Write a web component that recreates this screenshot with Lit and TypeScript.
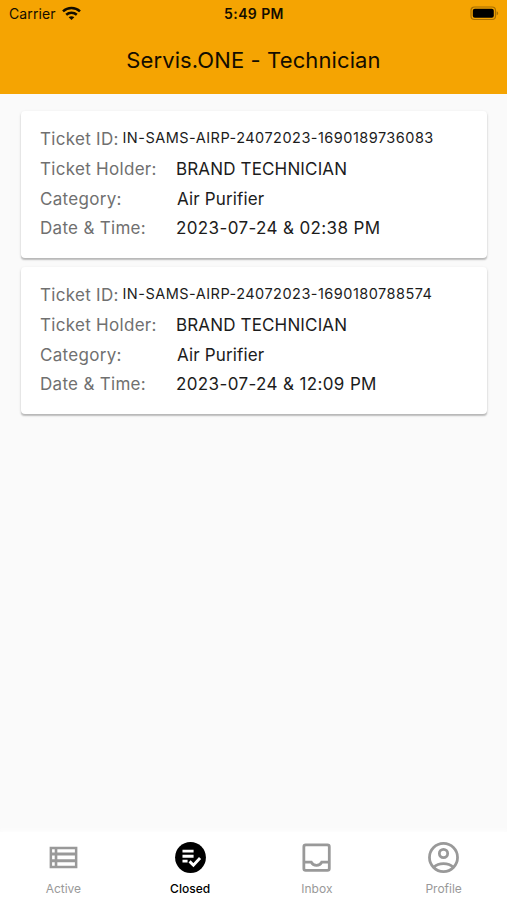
import { LitElement, html, css, svg } from "lit";
import { customElement, property } from "lit/decorators.js";

interface Ticket {
  id: string;
  holder: string;
  category: string;
  date: string;
}

const tickets: Ticket[] = [
  { id: "IN-SAMS-AIRP-24072023-1690189736083", holder: "BRAND TECHNICIAN", category: "Air Purifier", date: "2023-07-24 & 02:38 PM" },
  { id: "IN-SAMS-AIRP-24072023-1690180788574", holder: "BRAND TECHNICIAN", category: "Air Purifier", date: "2023-07-24 & 12:09 PM" },
];

const tabs = [
  {
    label: "Active",
    icon: svg`<path fill-rule="evenodd" d="M3 5h18v14H3zM4.600 6.600v2.100h1.700V6.600zM8 6.600v2.100h11.400V6.600zM4.600 10.700v2.400h1.700v-2.400zM8 10.700v2.400h11.400v-2.400zM4.600 15.100v2.300h1.700v-2.300zM8 15.100v2.300h11.400v-2.300z"/>`,
  },
  {
    label: "Closed",
    active: true,
    icon: svg`<circle cx="12" cy="12" r="10"/><path fill="#fff" d="M6.800 6.900H14v1.900H6.800zM6.800 10.200H14v1.900H6.800zM6.800 13.500h3.300v1.700H6.800z"/><path fill="none" stroke="#fff" stroke-width="1.900" d="M11.400 14.500l2.500 2.500 4.300-4.600"/>`,
  },
  {
    label: "Inbox",
    icon: svg`<g fill="none" stroke="currentColor" stroke-width="1.800"><rect x="3.800" y="3.800" width="16.500" height="16.500" rx="1.200"/><path d="M3.800 15h4.800c.6 1.300 1.800 2.100 3.400 2.100s2.800-.8 3.400-2.100h4.800"/></g>`,
  },
  {
    label: "Profile",
    icon: svg`<g fill="none" stroke="currentColor" stroke-width="1.800"><circle cx="12" cy="12" r="9.100"/><circle cx="12" cy="9.400" r="2.700"/><path d="M5.700 18.300c1.500-1.500 3.700-2.400 6.300-2.400s4.800.9 6.300 2.400"/></g>`,
  },
];

@customElement("status-bar")
class StatusBar extends LitElement {
  static styles = css`
    :host { display: grid; grid-template-columns: 1fr auto 1fr; align-items: center; height: 27px; padding: 0 8px 0 9px; font-size: 14px; }
    .carrier { display: flex; align-items: center; gap: 6px; letter-spacing: 0.1px; }
    .time { font-weight: 600; font-size: 14px; letter-spacing: 0.4px; }
    .battery { justify-self: end; display: block; margin-top: -1px; }
    .wifi { display: block; margin-top: -1px; }
  `;
  render() {
    return html`
      <div class="carrier">
        <span>Carrier</span>
        <svg class="wifi" width="19" height="15" viewBox="0 0 19 15" fill="none" stroke="#130d00" stroke-width="2.5">
          <path d="M1 5.400C5.800.9 13.200.9 18 5.400" />
          <path d="M4.200 8.800c3-2.700 7.600-2.700 10.600 0" />
          <path d="M6.700 11.300c1.600-1.400 4-1.400 5.600 0L9.500 14z" fill="#130d00" stroke="none" />
        </svg>
      </div>
      <span class="time">5:49 PM</span>
      <svg class="battery" width="30" height="15" viewBox="0 0 30 15">
        <rect x="2" y="1" width="24.500" height="12.500" rx="3.500" fill="none" stroke="#a66f02" stroke-width="1.200" />
        <rect x="3.800" y="2.800" width="21" height="9" rx="2" fill="#000" />
        <path d="M27.700 5.300c2 .8 2 3.200 0 4z" fill="#a66f02" />
      </svg>
    `;
  }
}

@customElement("ticket-card")
class TicketCard extends LitElement {
  @property({ attribute: false }) ticket!: Ticket;
  static styles = css`
    :host {
      display: flex; flex-direction: column; box-sizing: border-box; height: 146.500px; padding: 13px 19px 0;
      background: #fff; border-radius: 4px;
      box-shadow: 0 2px 1.500px -0.500px rgba(0, 0, 0, 0.2), 0 1px 3px rgba(0, 0, 0, 0.12);
    }
    .row { display: flex; height: 29.8px; line-height: 30px; font-size: 17px; white-space: nowrap; }
    .label { width: 136px; flex: none; color: #707070; letter-spacing: 0.3px; }
    .value { color: #1c1c1c; letter-spacing: 0.15px; }
    .date { letter-spacing: 0.37px; }
    .inset { padding-left: 1px; }
    .id-label { width: 82.500px; }
    .id { font-size: 14.500px; line-height: 27px; letter-spacing: 0.48px; }
  `;
  render() {
    const t = this.ticket;
    return html`
      <div class="row"><span class="label id-label">Ticket ID:</span><span class="value id">${t.id}</span></div>
      <div class="row"><span class="label">Ticket Holder:</span><span class="value">${t.holder}</span></div>
      <div class="row"><span class="label">Category:</span><span class="value inset">${t.category}</span></div>
      <div class="row"><span class="label">Date &amp; Time:</span><span class="value date">${t.date}</span></div>
    `;
  }
}

@customElement("app-root")
class AppRoot extends LitElement {
  static styles = css`
    :host {
      display: flex; flex-direction: column; height: 900px; background: #fafafa; color: #130d00;
      font-family: Inter, "Liberation Sans", sans-serif;
    }
    .header { height: 94px; flex: none; background: #f5a402; }
    .title { margin: 0; text-align: center; font-size: 22px; font-weight: 400; line-height: 66px; letter-spacing: 0.11px; }
    .list { flex: 1; display: flex; flex-direction: column; gap: 9.500px; padding: 17px 20px 0 21px; }
    .nav { flex: none; height: 68px; display: grid; grid-template-columns: repeat(4, 1fr); background: #fff; box-shadow: 0 0 6px 1px #fff; }
    .tab { display: flex; flex-direction: column; align-items: center; padding-top: 6.500px; color: #999; font-size: 12px; line-height: 16px; }
    .tab svg { width: 37px; height: 37px; display: block; margin-bottom: 5.500px; fill: currentColor; }
    .active { color: #000; font-weight: 500; }
  `;
  render() {
    return html`
      <header class="header">
        <status-bar></status-bar>
        <h1 class="title">Servis.ONE - Technician</h1>
      </header>
      <main class="list">${tickets.map((t) => html`<ticket-card .ticket=${t}></ticket-card>`)}</main>
      <nav class="nav">
        ${tabs.map((t) => html`<div class="tab ${t.active ? "active" : ""}"><svg viewBox="0 0 24 24">${t.icon}</svg><span>${t.label}</span></div>`)}
      </nav>
    `;
  }
}
